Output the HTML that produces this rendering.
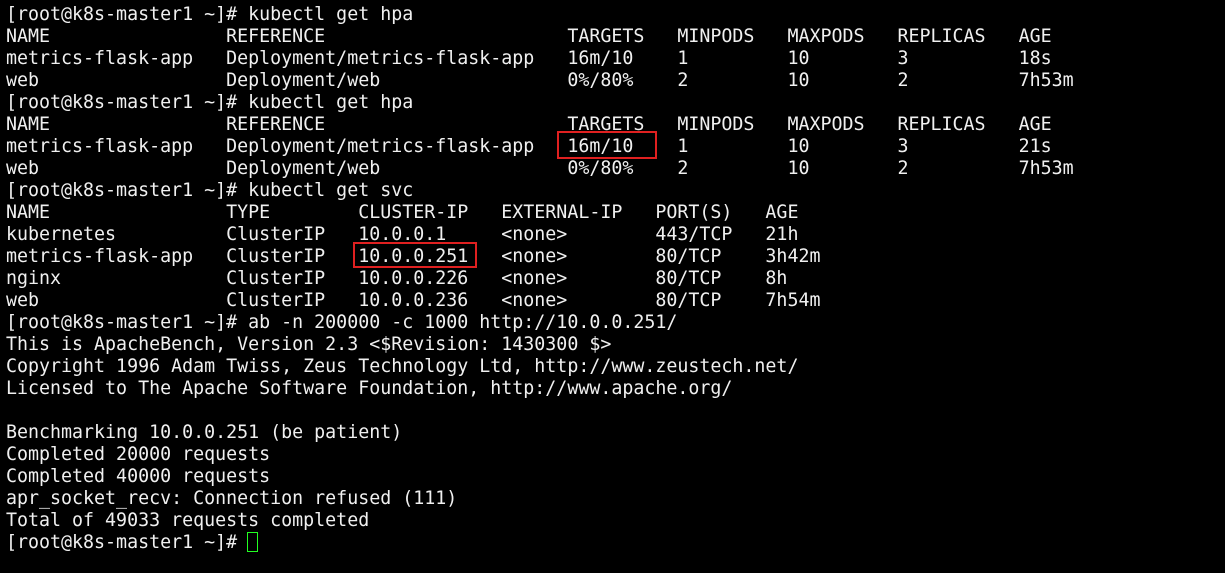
<html><head><style>
body{margin:0;background:#000;width:1225px;height:573px;overflow:hidden;position:relative}
pre{margin:0;position:absolute;left:6px;top:4px;font-family:"DejaVu Sans Mono","Liberation Mono",monospace;font-size:18.3px;line-height:22px;color:#f0f0f0;letter-spacing:0}
.b{position:absolute;border:2px solid #e02020}
</style></head><body>
<pre>[root@k8s-master1 ~]# kubectl get hpa
NAME                REFERENCE                      TARGETS   MINPODS   MAXPODS   REPLICAS   AGE
metrics-flask-app   Deployment/metrics-flask-app   16m/10    1         10        3          18s
web                 Deployment/web                 0%/80%    2         10        2          7h53m
[root@k8s-master1 ~]# kubectl get hpa
NAME                REFERENCE                      TARGETS   MINPODS   MAXPODS   REPLICAS   AGE
metrics-flask-app   Deployment/metrics-flask-app   16m/10    1         10        3          21s
web                 Deployment/web                 0%/80%    2         10        2          7h53m
[root@k8s-master1 ~]# kubectl get svc
NAME                TYPE        CLUSTER-IP   EXTERNAL-IP   PORT(S)   AGE
kubernetes          ClusterIP   10.0.0.1     &lt;none&gt;        443/TCP   21h
metrics-flask-app   ClusterIP   10.0.0.251   &lt;none&gt;        80/TCP    3h42m
nginx               ClusterIP   10.0.0.226   &lt;none&gt;        80/TCP    8h
web                 ClusterIP   10.0.0.236   &lt;none&gt;        80/TCP    7h54m
[root@k8s-master1 ~]# ab -n 200000 -c 1000 http://10.0.0.251/
This is ApacheBench, Version 2.3 &lt;$Revision: 1430300 $&gt;
Copyright 1996 Adam Twiss, Zeus Technology Ltd, http://www.zeustech.net/
Licensed to The Apache Software Foundation, http://www.apache.org/

Benchmarking 10.0.0.251 (be patient)
Completed 20000 requests
Completed 40000 requests
apr_socket_recv: Connection refused (111)
Total of 49033 requests completed
[root@k8s-master1 ~]# </pre>
<div class="b" style="left:557px;top:131px;width:96px;height:24px"></div>
<div class="b" style="left:353px;top:242px;width:120px;height:22px"></div>
<div style="position:absolute;left:247px;top:532px;width:9px;height:18px;border:1px solid #2f2"></div>
</body></html>
